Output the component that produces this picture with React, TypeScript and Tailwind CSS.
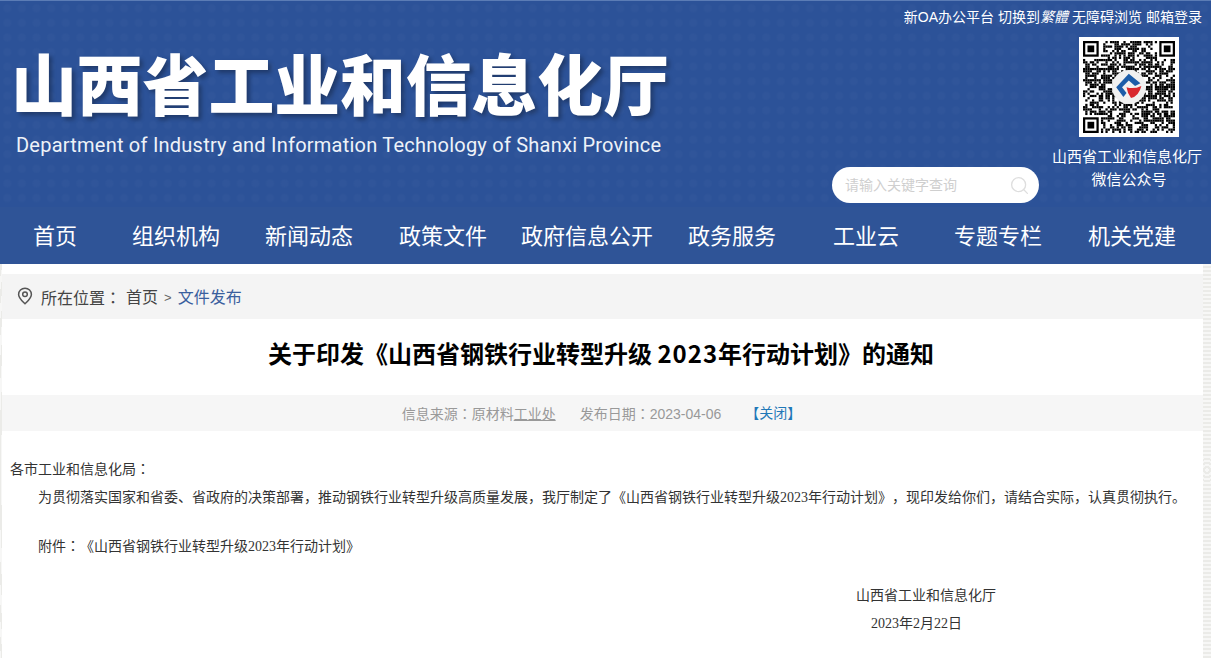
import { Search } from 'lucide-react'

const navItems = [
  { label: '首页', width: 'w-[110px]' },
  { label: '组织机构', width: 'w-[132px]' },
  { label: '新闻动态', width: 'w-[134px]' },
  { label: '政策文件', width: 'w-[134px]' },
  { label: '政府信息公开', width: 'w-[154px]' },
  { label: '政务服务', width: 'w-[136px]' },
  { label: '工业云', width: 'w-[132px]' },
  { label: '专题专栏', width: 'w-[132px]' },
  { label: '机关党建', width: 'w-[136px]' },
]

const QR_SIZE = 41

// 定位角
function inFinder(x: number, y: number) {
  const corners = [
    [0, 0],
    [QR_SIZE - 7, 0],
    [0, QR_SIZE - 7],
  ]
  return corners.some(([cx, cy]) => x >= cx - 1 && x <= cx + 7 && y >= cy - 1 && y <= cy + 7)
}

function qrModules() {
  const cells: [number, number][] = []
  let seed = 20230406
  for (let y = 0; y < QR_SIZE; y++) {
    for (let x = 0; x < QR_SIZE; x++) {
      seed = (seed * 1103515245 + 12345) & 0x7fffffff
      if (inFinder(x, y)) continue
      if ((seed >> 16) % 100 < 55) cells.push([x, y])
    }
  }
  return cells
}

function Finder({ x, y }: { x: number; y: number }) {
  return (
    <g>
      <rect x={x + 0.5} y={y + 0.5} width={6} height={6} fill="none" stroke="#000" strokeWidth={1} />
      <rect x={x + 2} y={y + 2} width={3} height={3} fill="#000" />
    </g>
  )
}

function QrCode() {
  return (
    <div className="w-[100px] h-[100px] bg-white p-[4px]">
      <svg viewBox={`0 0 ${QR_SIZE} ${QR_SIZE}`} className="w-[92px] h-[92px] block">
        {qrModules().map(([x, y]) => (
          <rect key={`${x}-${y}`} x={x} y={y} width={1} height={1} fill="#000" />
        ))}
        <Finder x={0} y={0} />
        <Finder x={QR_SIZE - 7} y={0} />
        <Finder x={0} y={QR_SIZE - 7} />
        <circle cx={20.5} cy={20.5} r={7.6} fill="#f0f0f0" />
        <path d="M20.4 14.6 L25.6 18.8 L23.2 20 L20.4 17.6 L17.4 20.6 L19.4 23.2 L18 25 L14.8 20.6 Z" fill="#1c5ca8" />
        <path d="M19.4 20.6 Q22.6 21.6 26 20 Q25 24.4 21.4 25.4 Q19.8 23.4 19.4 20.6 Z" fill="#d9282e" />
      </svg>
    </div>
  )
}

export default function App() {
  return (
    <div className="relative h-[658px] overflow-hidden bg-[#efefed] bg-[repeating-radial-gradient(circle_at_1207px_470px,#f7f7f6_0px,#f7f7f6_2px,#ebebe8_2px,#ebebe8_4px)] [text-spacing-trim:space-all] font-['Liberation_Sans','Noto_Sans_CJK_SC',sans-serif]">
      {/* 头部 */}
      <header className="relative h-[207px] flex border-t border-[#5b7cb5] bg-[#2c5298] text-white overflow-hidden">
        <div className="absolute inset-0 bg-[radial-gradient(circle,rgba(255,255,255,0.02)_3px,transparent_5px)] bg-[length:14.6px_14.6px]" />
        <div className="relative w-[831px] pl-[11px] pt-[39px]">
          <h1 className="text-[65.8px] leading-[84px] font-black whitespace-nowrap font-['Noto_Sans_CJK_SC',sans-serif] [text-shadow:3px_3px_4px_rgba(0,0,0,0.3)]">
            山西省工业和信息化厅
          </h1>
          <p className="pl-[5px] mt-[7px] text-[20px] leading-[28px] font-['Roboto',sans-serif] text-[#eef2f8] whitespace-nowrap tracking-[0.23px]">
            Department of Industry and Information Technology of Shanxi Province
          </p>
        </div>
        <div className="relative w-[380px] pr-[9px] flex flex-col">
          <div className="h-[32px] flex items-center justify-end gap-[4px] text-[14px] whitespace-nowrap">
            <span>新OA办公平台</span>
            <span>切换到<span className="italic">繁體</span></span>
            <span>无障碍浏览</span>
            <span>邮箱登录</span>
          </div>
          <div className="flex-1 flex justify-between">
            <div className="self-end mb-[4px] ml-[1px] w-[207px] h-[36px] rounded-full bg-white flex items-center justify-between pl-[13px] pr-[9px]">
              <span className="text-[14px] text-[#cfcfcf]">请输入关键字查询</span>
              <Search className="w-[21px] h-[21px] text-[#dedede]" strokeWidth={1.5} />
            </div>
            <div className="w-[150px] flex flex-col items-center text-[15px] leading-[23px]">
              <div className="mt-[4px] mb-[8px] ml-[4px]">
                <QrCode />
              </div>
              <span className="whitespace-nowrap">山西省工业和信息化厅</span>
              <span className="ml-[4px]">微信公众号</span>
            </div>
          </div>
        </div>
      </header>

      {/* 导航 */}
      <nav className="h-[57px] flex items-center pb-[2px] bg-[#2f5497] text-white text-[22px] font-['Noto_Sans_CJK_SC',sans-serif]">
        {navItems.map((item) => (
          <a key={item.label} className={`${item.width} text-center whitespace-nowrap`}>
            {item.label}
          </a>
        ))}
      </nav>

      {/* 主体 */}
      <main className="ml-[2px] w-[1201px] h-[394px] bg-white pt-[10px]">
        <div className="h-[45px] flex items-center pl-[15px] pt-[3px] bg-[#f4f4f4] text-[16px] text-[#444]">
          <svg viewBox="0 0 16 18" className="w-[16px] h-[18px] mr-[8px] mb-[4px]" fill="none" stroke="#555" strokeWidth={1.5}>
            <path d="M8 1.2C4.4 1.2 1.6 4 1.6 7.4c0 3.6 3.6 6.6 6.4 9.4 2.8-2.8 6.4-5.8 6.4-9.4C14.4 4 11.6 1.2 8 1.2z" />
            <circle cx={8} cy={7.2} r={2.3} />
          </svg>
          <span>所在位置<span className="font-['Noto_Sans_CJK_TC',sans-serif]">：</span></span>
          <span className="ml-[5px]">首页</span>
          <span className="mx-[6px] text-[13px] text-[#666]">&gt;</span>
          <span className="text-[#3a5f9e]">文件发布</span>
        </div>

        <h2 className="h-[76px] flex items-center justify-center pb-[9px] pr-[3px] text-[24px] font-bold text-black font-['Noto_Sans_CJK_SC',sans-serif] whitespace-pre">
          关于印发《山西省钢铁行业转型升级 <span className="tracking-[1px]">2023</span>年行动计划》的通知
        </h2>

        <div className="h-[36px] flex items-center justify-center pt-[1px] pr-[2px] bg-[#f6f6f6] text-[14px] text-[#999]">
          <span>信息来源<span className="font-['Noto_Sans_CJK_TC',sans-serif]">：</span>原材料<span className="underline">工业处</span></span>
          <span className="ml-[24px]">发布日期<span className="font-['Noto_Sans_CJK_TC',sans-serif]">：</span>2023-04-06</span>
          <span className="ml-[24px] text-[#1f78b8]">【关闭】</span>
        </div>

        <article className="pt-[23px] px-[8px] text-[14px] leading-[28px] text-[#333] font-['Liberation_Serif','Noto_Sans_CJK_SC',serif]">
          <p>各市工业和信息化局<span className="font-['Noto_Sans_CJK_TC',serif]">：</span></p>
          <p className="pl-[28px] whitespace-nowrap">
            为贯彻落实国家和省委、省政府的决策部署，推动钢铁行业转型升级高质量发展，我厅制定了《山西省钢铁行业转型升级2023年行动计划》，现印发给你们，请结合实际，认真贯彻执行。
          </p>
          <p className="pl-[28px] mt-[19px]">附件<span className="font-['Noto_Sans_CJK_TC',serif]">：</span>《山西省钢铁行业转型升级2023年行动计划》</p>
          <p className="pl-[846px] mt-[21px]">山西省工业和信息化厅</p>
          <p className="pl-[861px]">2023年2月22日</p>
        </article>
      </main>
    </div>
  )
}
